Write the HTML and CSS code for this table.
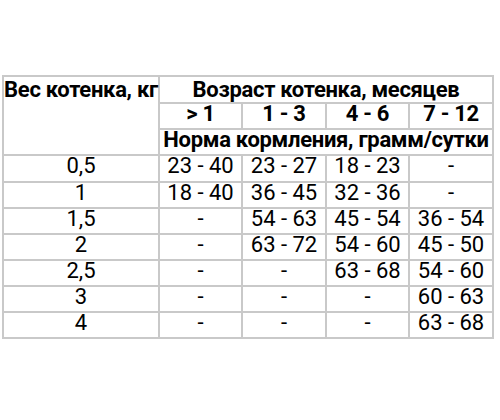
FILE: index.html
```html
<!DOCTYPE html>
<html lang="ru">
<head>
<meta charset="utf-8">
<title>Норма кормления котенка</title>
<link rel="stylesheet" href="styles.css">
</head>
<body>
<div class="feed-table">
  <div class="cell head first weight">Вес котенка, кг</div>
  <div class="cell head first span4">Возраст котенка, месяцев</div>
  <div class="cell head">&gt; 1</div>
  <div class="cell head">1 - 3</div>
  <div class="cell head">4 - 6</div>
  <div class="cell head">7 - 12</div>
  <div class="cell head span4">Норма кормления, грамм/сутки</div>

  <div class="cell">0,5</div><div class="cell">23 - 40</div><div class="cell">23 - 27</div><div class="cell">18 - 23</div><div class="cell">-</div>
  <div class="cell">1</div><div class="cell">18 - 40</div><div class="cell">36 - 45</div><div class="cell">32 - 36</div><div class="cell">-</div>
  <div class="cell">1,5</div><div class="cell">-</div><div class="cell">54 - 63</div><div class="cell">45 - 54</div><div class="cell">36 - 54</div>
  <div class="cell">2</div><div class="cell">-</div><div class="cell">63 - 72</div><div class="cell">54 - 60</div><div class="cell">45 - 50</div>
  <div class="cell">2,5</div><div class="cell">-</div><div class="cell">-</div><div class="cell">63 - 68</div><div class="cell">54 - 60</div>
  <div class="cell">3</div><div class="cell">-</div><div class="cell">-</div><div class="cell">-</div><div class="cell">60 - 63</div>
  <div class="cell">4</div><div class="cell">-</div><div class="cell">-</div><div class="cell">-</div><div class="cell">63 - 68</div>
</div>
</body>
</html>
```
FILE: styles.css
```css
html, body {
  margin: 0;
  padding: 0;
  background: #ffffff;
}

body {
  width: 500px;
  height: 420px;
  overflow: hidden;
  font-family: Roboto, "Liberation Sans", sans-serif;
  color: #000000;
}

.feed-table {
  display: grid;
  grid-template-columns: 154px 81px 82px 81px 82px;
  grid-template-rows: 25px 24px 24px 25px 24px 24px 24px 24px 24px 24px;
  gap: 2px;
  padding: 2px;
  background: #c9c9c9;
  width: max-content;
  margin: 75px 0 0 2px;
}

.cell {
  background: #ffffff;
  font-size: 22px;
  line-height: 20px;
  text-align: center;
  white-space: nowrap;
}

.head {
  font-weight: 700;
  letter-spacing: -0.3px;
}

.first {
  line-height: 26px;
}

.weight {
  grid-row: span 3;
}

.span4 {
  grid-column: span 4;
}
```
